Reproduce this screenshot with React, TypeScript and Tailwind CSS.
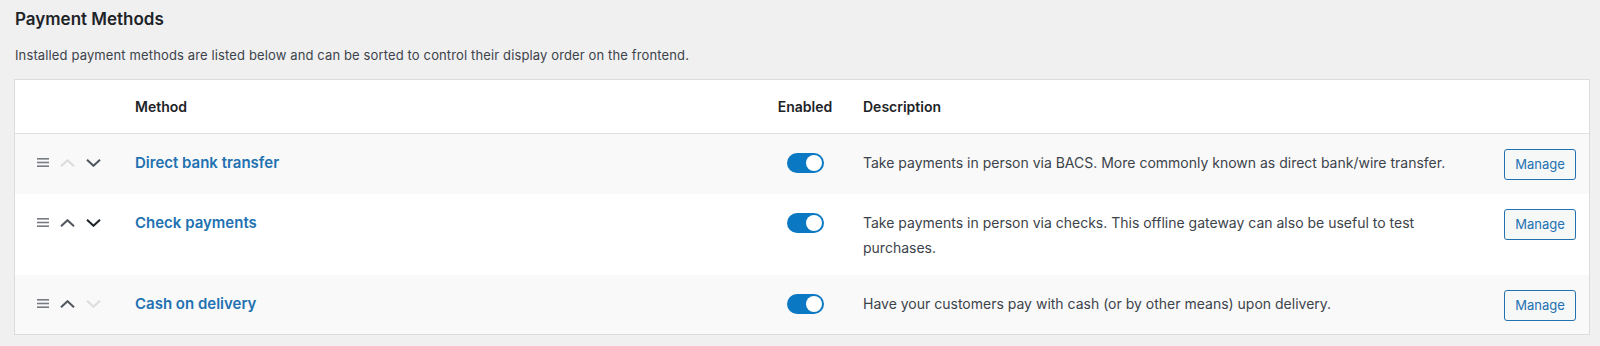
import React from "react";

type Method = {
  name: string;
  description: React.ReactNode;
  upColor: string;
  downColor: string;
  striped: boolean;
  last?: boolean;
};

const methods: Method[] = [
  {
    name: "Direct bank transfer",
    description: "Take payments in person via BACS. More commonly known as direct bank/wire transfer.",
    upColor: "text-[#dcdcde]",
    downColor: "text-[#50575e]",
    striped: true,
  },
  {
    name: "Check payments",
    description: (
      <>
        Take payments in person via checks. This offline gateway can also be useful to test
        <br />
        purchases.
      </>
    ),
    upColor: "text-[#50575e]",
    downColor: "text-[#1d2327]",
    striped: false,
  },
  {
    name: "Cash on delivery",
    description: "Have your customers pay with cash (or by other means) upon delivery.",
    upColor: "text-[#50575e]",
    downColor: "text-[#dcdcde]",
    striped: true,
    last: true,
  },
];

function Chevron({ up, className }: { up?: boolean; className: string }) {
  return (
    <svg className={`w-[15px] h-[8px] ${className}`} viewBox="0 0 15 8" fill="none" stroke="currentColor" strokeWidth={2}>
      {up ? <path d="M1 7.3L7.5 1.2L14 7.3" /> : <path d="M1 0.7L7.5 6.8L14 0.7" />}
    </svg>
  );
}

function DragHandle() {
  return (
    <svg className="w-[12px] h-[9px] text-[#787c82]" viewBox="0 0 12 9" fill="currentColor">
      <rect x="0" y="0" width="12" height="1.6" />
      <rect x="0" y="3.7" width="12" height="1.6" />
      <rect x="0" y="7.4" width="12" height="1.6" />
    </svg>
  );
}

function Toggle() {
  return (
    <div className="relative w-[37px] h-[20px] rounded-full bg-[#0a78c2]">
      <div className="absolute right-[2px] top-[2px] w-[16px] h-[16px] rounded-full bg-white" />
    </div>
  );
}

export default function App() {
  return (
    <div
      className="min-h-[346px] bg-[#f0f0f1] pt-[8px] pl-[14px] pr-[10px] text-[#1d2327]"
      style={{ fontFamily: "Inter, 'Noto Sans', sans-serif" }}
    >
      <h2 className="pl-[1px] text-[17px] leading-[22px] font-semibold">Payment Methods</h2>
      <p className="mt-[15px] pl-[1px] text-[13px] leading-[20px] tracking-[0.13px] text-[#3c434a]">
        Installed payment methods are listed below and can be sorted to control their display order on the frontend.
      </p>

      <div className="mt-[14px] border border-[#dcdcde] bg-white">
        {/* Header */}
        <div className="grid grid-cols-[120px_630px_80px_1fr_100px] h-[54px] items-center border-b border-[#e2e2e4] text-[14px] font-semibold">
          <div />
          <div>Method</div>
          <div className="text-center">Enabled</div>
          <div className="pl-[18px]">Description</div>
          <div />
        </div>

        {methods.map((m) => (
          <div
            key={m.name}
            className={`grid grid-cols-[120px_630px_80px_1fr_100px] items-start ${m.striped ? "bg-[#f9f9f9]" : "bg-white"}`}
          >
            <div className="flex items-center gap-[11px] pl-[22px] pt-[24px]">
              <DragHandle />
              <Chevron up className={m.upColor} />
              <Chevron className={m.downColor} />
            </div>
            <div className="pt-[16px] text-[15px] leading-[25px] font-semibold text-[#2271b1]">{m.name}</div>
            <div className="flex justify-center pt-[19px]">
              <Toggle />
            </div>
            <div className="pl-[18px] pt-[16px] pb-[15px] text-[14px] leading-[25px] text-[#3c434a]">{m.description}</div>
            <div className={`flex justify-end pr-[13px] pt-[15px] ${m.last ? "pb-[13px]" : "pb-[14px]"}`}>
              <button className="w-[72px] h-[31px] rounded-[3px] border border-[#2271b1] bg-[#f6f7f7] text-[13px] text-[#2271b1]">
                Manage
              </button>
            </div>
          </div>
        ))}
      </div>
    </div>
  );
}
